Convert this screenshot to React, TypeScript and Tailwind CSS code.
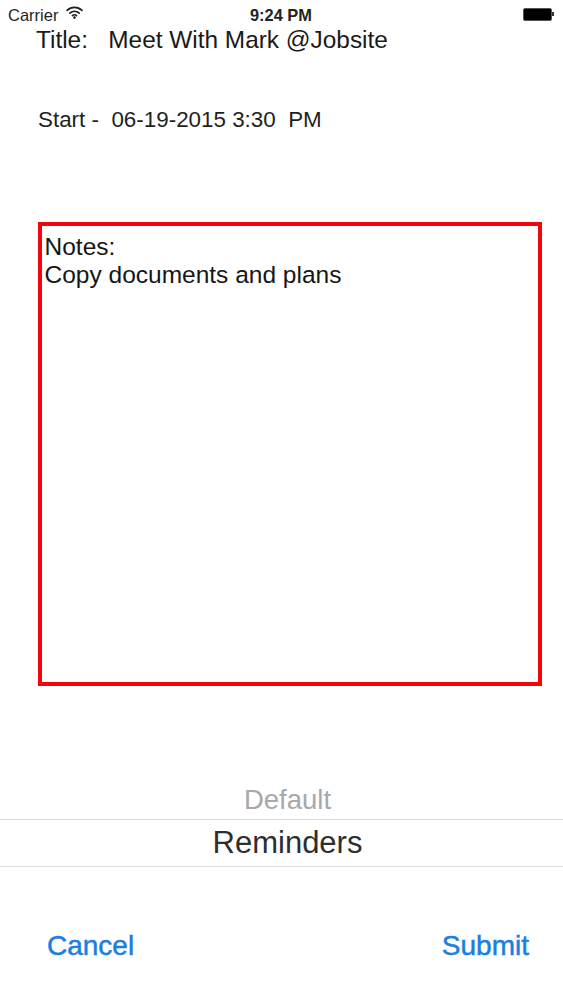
export default function App() {
  return (
    <div className="w-[563px] h-[1000px] bg-white flex flex-col font-['Liberation_Sans',Arial,sans-serif] overflow-hidden">
      <div className="h-[28px] shrink-0 relative flex items-center justify-between pl-[8px] pr-[9px] text-[#1f1f1f]">
        <div className="flex items-center gap-[8px] mt-[2px]">
          <span className="text-[16.5px] leading-[28px]">Carrier</span>
          <svg width="17" height="13" viewBox="0 0 16 12" className="mb-[5px]" fill="none" stroke="#1f1f1f" strokeLinecap="round">
            <path d="M1 4 C5 0.2 11 0.2 15 4" strokeWidth="1.6" />
            <path d="M3.6 6.6 C6.2 4.4 9.8 4.4 12.4 6.6" strokeWidth="1.6" />
            <path d="M6 9 C7.2 8 8.8 8 10 9" strokeWidth="1.4" />
            <circle cx="8" cy="10.8" r="0.7" fill="#1f1f1f" />
          </svg>
        </div>
        <span className="absolute left-[250px] top-[1px] text-[16.4px] leading-[28px] font-bold text-[#222]">9:24 PM</span>
        <div className="flex items-center">
          <div className="w-[29px] h-[13px] rounded-[2px] bg-black border border-[#555]" />
          <div className="w-[2px] h-[4px] bg-[#333]" />
        </div>
      </div>
      <div className="pl-[36px] text-[24.4px] leading-[24px] text-[#1a1a1a] whitespace-pre">Title:   Meet With Mark @Jobsite</div>
      <div className="pl-[38px] mt-[56px] text-[22.4px] leading-[24px] text-[#1f1f1f] whitespace-pre">Start -  06-19-2015 3:30  PM</div>
      <div className="ml-[38px] mt-[90px] w-[504px] h-[464px] border-4 border-[#f2060e] pl-[2.5px] pt-[7px] text-[24.5px] leading-[28px] text-[#161616] shrink-0">
        <div>Notes:</div>
        <div>Copy documents and plans</div>
      </div>
      <div className="mt-[97px] h-[36px] text-center pl-[12px] text-[27.5px] leading-[34px] text-[#a8a8aa]">Default</div>
      <div className="h-[48px] border-y border-[#dcdcde] flex items-center justify-center pl-[12px] text-[31px] text-[#2e2e30] shrink-0">Reminders</div>
      <div className="flex justify-between pl-[47px] pr-[34px] mt-[62px] text-[28px] leading-[34px] text-[#1a7fe0] [-webkit-text-stroke:0.5px_#1a7fe0]">
        <span>Cancel</span>
        <span>Submit</span>
      </div>
    </div>
  );
}
